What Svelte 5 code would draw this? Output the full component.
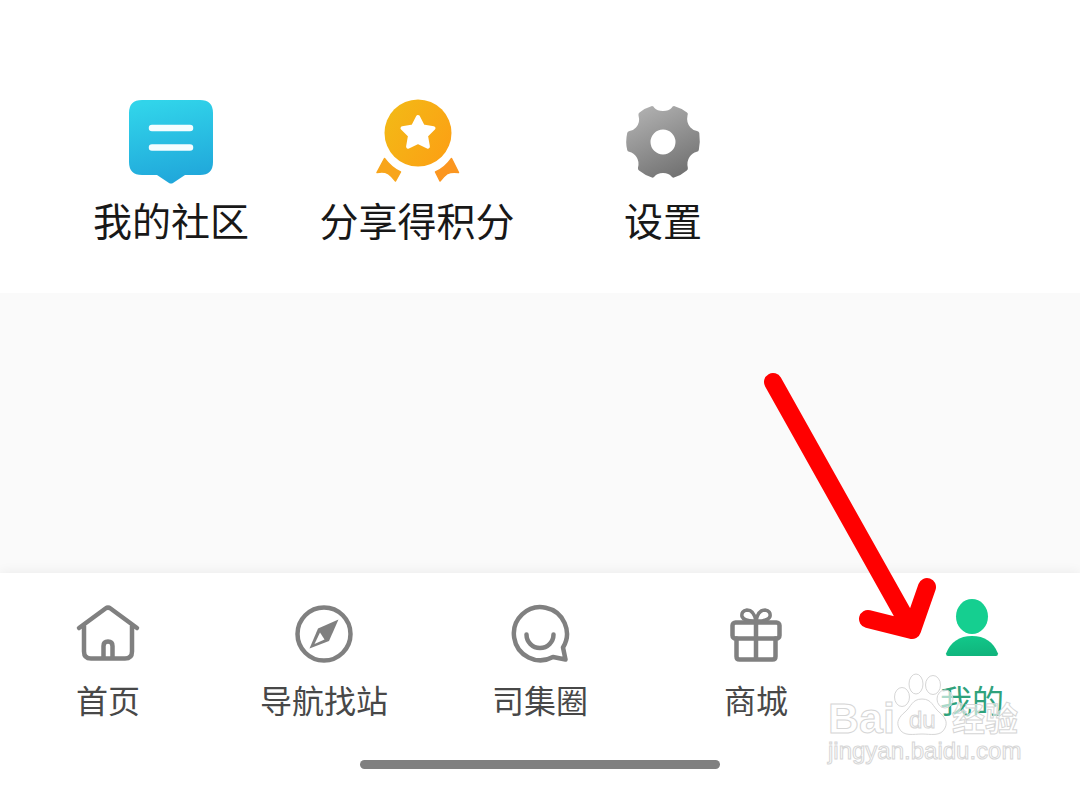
<script>
  const services = [
    { id: 'community', label: '我的社区' },
    { id: 'share', label: '分享得积分' },
    { id: 'settings', label: '设置' }
  ];
  const tabs = [
    { id: 'home', label: '首页' },
    { id: 'stations', label: '导航找站' },
    { id: 'circle', label: '司集圈' },
    { id: 'mall', label: '商城' },
    { id: 'mine', label: '我的' }
  ];
  let active = $state('mine');
</script>

<div class="page">
  <main>
    <section class="services">
      {#each services as service (service.id)}
        <button class="service" type="button">
          <svg class="service-icon" viewBox="0 0 90 90" aria-hidden="true">
            {#if service.id === 'community'}
              <defs>
                <linearGradient id="blue" x1="0.4" y1="0" x2="0.6" y2="1">
                  <stop offset="0" stop-color="#31d4ea" />
                  <stop offset="1" stop-color="#20a6da" />
                </linearGradient>
              </defs>
              <path fill="url(#blue)" d="M16 3h58q13 0 13 13v49q0 13-13 13H59L47 86q-2 1-4 0L31 78H16Q3 78 3 65V16Q3 3 16 3Z" />
              <path d="M26 31h38M26 50.500h38" stroke="#f4fdff" stroke-width="6.500" stroke-linecap="round" />
            {:else if service.id === 'share'}
              <defs>
                <linearGradient id="gold" x1="0" y1="0.2" x2="1" y2="0.8">
                  <stop offset="0" stop-color="#f3b916" />
                  <stop offset="1" stop-color="#fca014" />
                </linearGradient>
              </defs>
              <circle cx="46" cy="36" r="33.500" fill="url(#gold)" />
              <path fill="#fff" stroke="#fff" stroke-width="4" stroke-linejoin="round" d="m46 20 5 9.600 10.500 1.600-7.500 7.500 1.900 11L46 45l-9.900 4.700 1.900-11-7.500-7.500L41 29.600Z" />
              <path fill="#f8a51b" stroke="#f8a51b" stroke-width="1.500" stroke-linejoin="round" d="M12.500 61.500 5 75.500q7-1.500 11 1 4 3 7.500 7.500L28.500 75q-9-4-16-13.500Z" />
              <path fill="#fb9620" stroke="#fb9620" stroke-width="1.500" stroke-linejoin="round" d="M79.500 61.500l7 14q-7-1-11 1-4 3-7.500 7.500L63.500 75Q73 71 79.500 61.500Z" />
            {:else}
              <defs>
                <linearGradient id="steel" x1="0.250" y1="0" x2="0.750" y2="1">
                  <stop offset="0" stop-color="#b0b0b0" />
                  <stop offset="1" stop-color="#707070" />
                </linearGradient>
              </defs>
              <path fill="url(#steel)" fill-rule="evenodd" d="M34 9Q35.500 9 36.500 11 39 14 45 14t8.500-3Q54.500 9 56 9 63 11 69 15.500q1.500 1 .5 3-1.500 7 3 12 2 2.500 6.500 3.500 2 .500 2.300 2Q82.500 45 80.800 53q-.3 1.500-2 1.800Q74 56 71.500 60q-3 4.500-1.700 10.500.5 2-1 3Q63 78.500 56 80.500q-1.500.500-2.500-1Q51 76 45 76t-8.500 3.500q-1 1.500-2.500 1Q26.500 78 21 73.500q-1.500-1-1-3 1.500-6-1.500-10.500-2.500-4-7.300-5.200-1.700-.3-2-1.800-2-8 0-17 .3-1.500 2.300-2 4.500-1 6.500-3.500 4.500-5 2.500-12-.5-2 1-3Q27 11 34 9ZM45 32.500a12.500 12.500 0 1 0 0 25 12.500 12.500 0 0 0 0-25Z" />
            {/if}
          </svg>
          <span>{service.label}</span>
        </button>
      {/each}
    </section>
  </main>

  <nav>
    <div class="tabs">
      {#each tabs as tab (tab.id)}
        <button class="tab" class:active={tab.id === active} type="button" onclick={() => (active = tab.id)}>
          <svg class="tab-icon" viewBox="0 0 70 70" aria-hidden="true">
            {#if tab.id === 'home'}
              <path d="M6 33 32.500 13.500q2.500-1.800 5 0L64 33M11 31v25.500q0 7 7 7h34q7 0 7-7V31M30.500 63V51q0-4.500 4.500-4.500t4.500 4.500v12" />
            {:else if tab.id === 'stations'}
              <circle cx="35" cy="39" r="26.500" />
              <path d="M49.500 24.500 29 33.500l-8.500 20L40 46Z" fill="#808080" stroke="none" />
              <path d="m31 37.500-5.500 11.500 10-4.500Z" fill="#fff" stroke="none" />
            {:else if tab.id === 'circle'}
              <path d="M58 52.500A26.500 26.500 0 1 0 48 62L60.500 64.500Z" />
              <path d="M21.500 39.500a13.500 13.500 0 0 0 27 0" />
            {:else if tab.id === 'mall'}
              <rect x="11.500" y="27.500" width="47" height="16" rx="3" />
              <path d="M15.500 43.500v18q0 3 3 3h33q3 0 3-3v-18M35 27v37" />
              <path stroke-width="3.500" d="M35 26q-2-11-9-11-6 1-5 6.500 2 5 14 4.500 12 .5 14-4.500 1-5.500-5-6.500-7 0-9 11Z" />
            {:else}
              <defs>
                <linearGradient id="green" x1="0.400" y1="0" x2="0.600" y2="1">
                  <stop offset="0" stop-color="#12c88a" />
                  <stop offset="1" stop-color="#10b47c" />
                </linearGradient>
              </defs>
              <g stroke="none">
                <ellipse cx="35" cy="21.500" rx="16" ry="17.500" fill="#15cf90" />
                <path fill="url(#green)" d="M9 58.500Q16 41 35 41t26 17.500q0 2.500-2 2.500H11q-2 0-2-2.500Z" />
              </g>
            {/if}
          </svg>
          <span>{tab.label}</span>
        </button>
      {/each}
    </div>
    <div class="home-indicator"></div>

    <svg class="arrow" viewBox="0 0 100 290" aria-hidden="true">
      <path d="M23 31 162 279M118 268 162 279 177 236" />
    </svg>

    <svg class="watermark" viewBox="0 0 200 100" aria-label="Baidu 经验">
      <text class="latin" x="3" y="63">Bai</text>
      <g class="paw">
        <ellipse cx="77" cy="27" rx="7.500" ry="9.500" />
        <ellipse cx="91" cy="14" rx="7" ry="10" />
        <ellipse cx="108" cy="15" rx="7.500" ry="9.500" />
        <ellipse cx="120" cy="29" rx="8" ry="9" />
        <path d="M97 29c-10 0-11 8-17 13-6 5-9 10-6 16 4 9 15 6 23 6s19 3 23-6c3-6 0-11-6-16-6-5-7-13-17-13Z" />
      </g>
      <text class="du" x="84" y="58">du</text>
      <text class="cjk" x="127" y="61">经验</text>
      <text class="site" x="3" y="89">jingyan.baidu.com</text>
    </svg>
  </nav>
</div>

<style>
  :global(body) {
    margin: 0;
    background: #fafafa;
  }

  .page {
    display: flex;
    flex-direction: column;
    min-height: 100vh;
    font-family: 'Noto Sans CJK SC', sans-serif;
    background: #fafafa;
  }

  main {
    flex: 1;
  }

  button {
    display: flex;
    flex-direction: column;
    align-items: center;
    padding: 0;
    border: 0;
    background: none;
    font-family: inherit;
    white-space: nowrap;
    cursor: pointer;
  }

  .services {
    display: grid;
    grid-template-columns: repeat(4, 1fr);
    padding: 97px 48px 50px;
    background: #fff;
  }

  .service {
    gap: 8px;
    font-size: 39px;
    line-height: 48px;
    color: #181818;
  }

  .service-icon {
    width: 90px;
    height: 90px;
  }

  nav {
    position: relative;
    padding-bottom: 20px;
    background: #fff;
    box-shadow: 0 0 12px rgba(0, 0, 0, 0.07);
  }

  .tabs {
    display: grid;
    grid-template-columns: repeat(5, 1fr);
    padding: 22px 0 41px;
  }

  .tab {
    gap: 14px;
    font-size: 32px;
    line-height: 40px;
    color: #484848;
  }

  .tab.active {
    color: #2fa27c;
  }

  .tab-icon {
    width: 70px;
    height: 70px;
    fill: none;
    stroke: #808080;
    stroke-width: 4.5;
    stroke-linecap: round;
    stroke-linejoin: round;
  }

  .home-indicator {
    width: 33.333%;
    height: 9px;
    margin: 0 auto;
    border-radius: 5px;
    background: #808080;
  }

  .arrow {
    position: absolute;
    right: 230px;
    bottom: 148px;
    width: 100px;
    height: 290px;
    overflow: visible;
    fill: none;
    stroke: #f00;
    stroke-width: 18;
    stroke-linecap: round;
    stroke-linejoin: round;
    pointer-events: none;
  }

  .watermark {
    position: absolute;
    right: 55px;
    bottom: 19px;
    width: 200px;
    height: 100px;
    fill: rgba(255, 255, 255, 0.6);
    stroke: #d6d6d6;
    stroke-width: 1;
    font-family: 'Liberation Sans', sans-serif;
    pointer-events: none;
  }

  .latin {
    font-size: 43px;
    font-weight: 700;
  }

  .du {
    font-size: 24px;
  }

  .cjk {
    font-family: 'Noto Sans CJK SC', sans-serif;
    font-size: 33px;
    font-weight: 700;
  }

  .site {
    font-size: 24px;
  }
</style>
